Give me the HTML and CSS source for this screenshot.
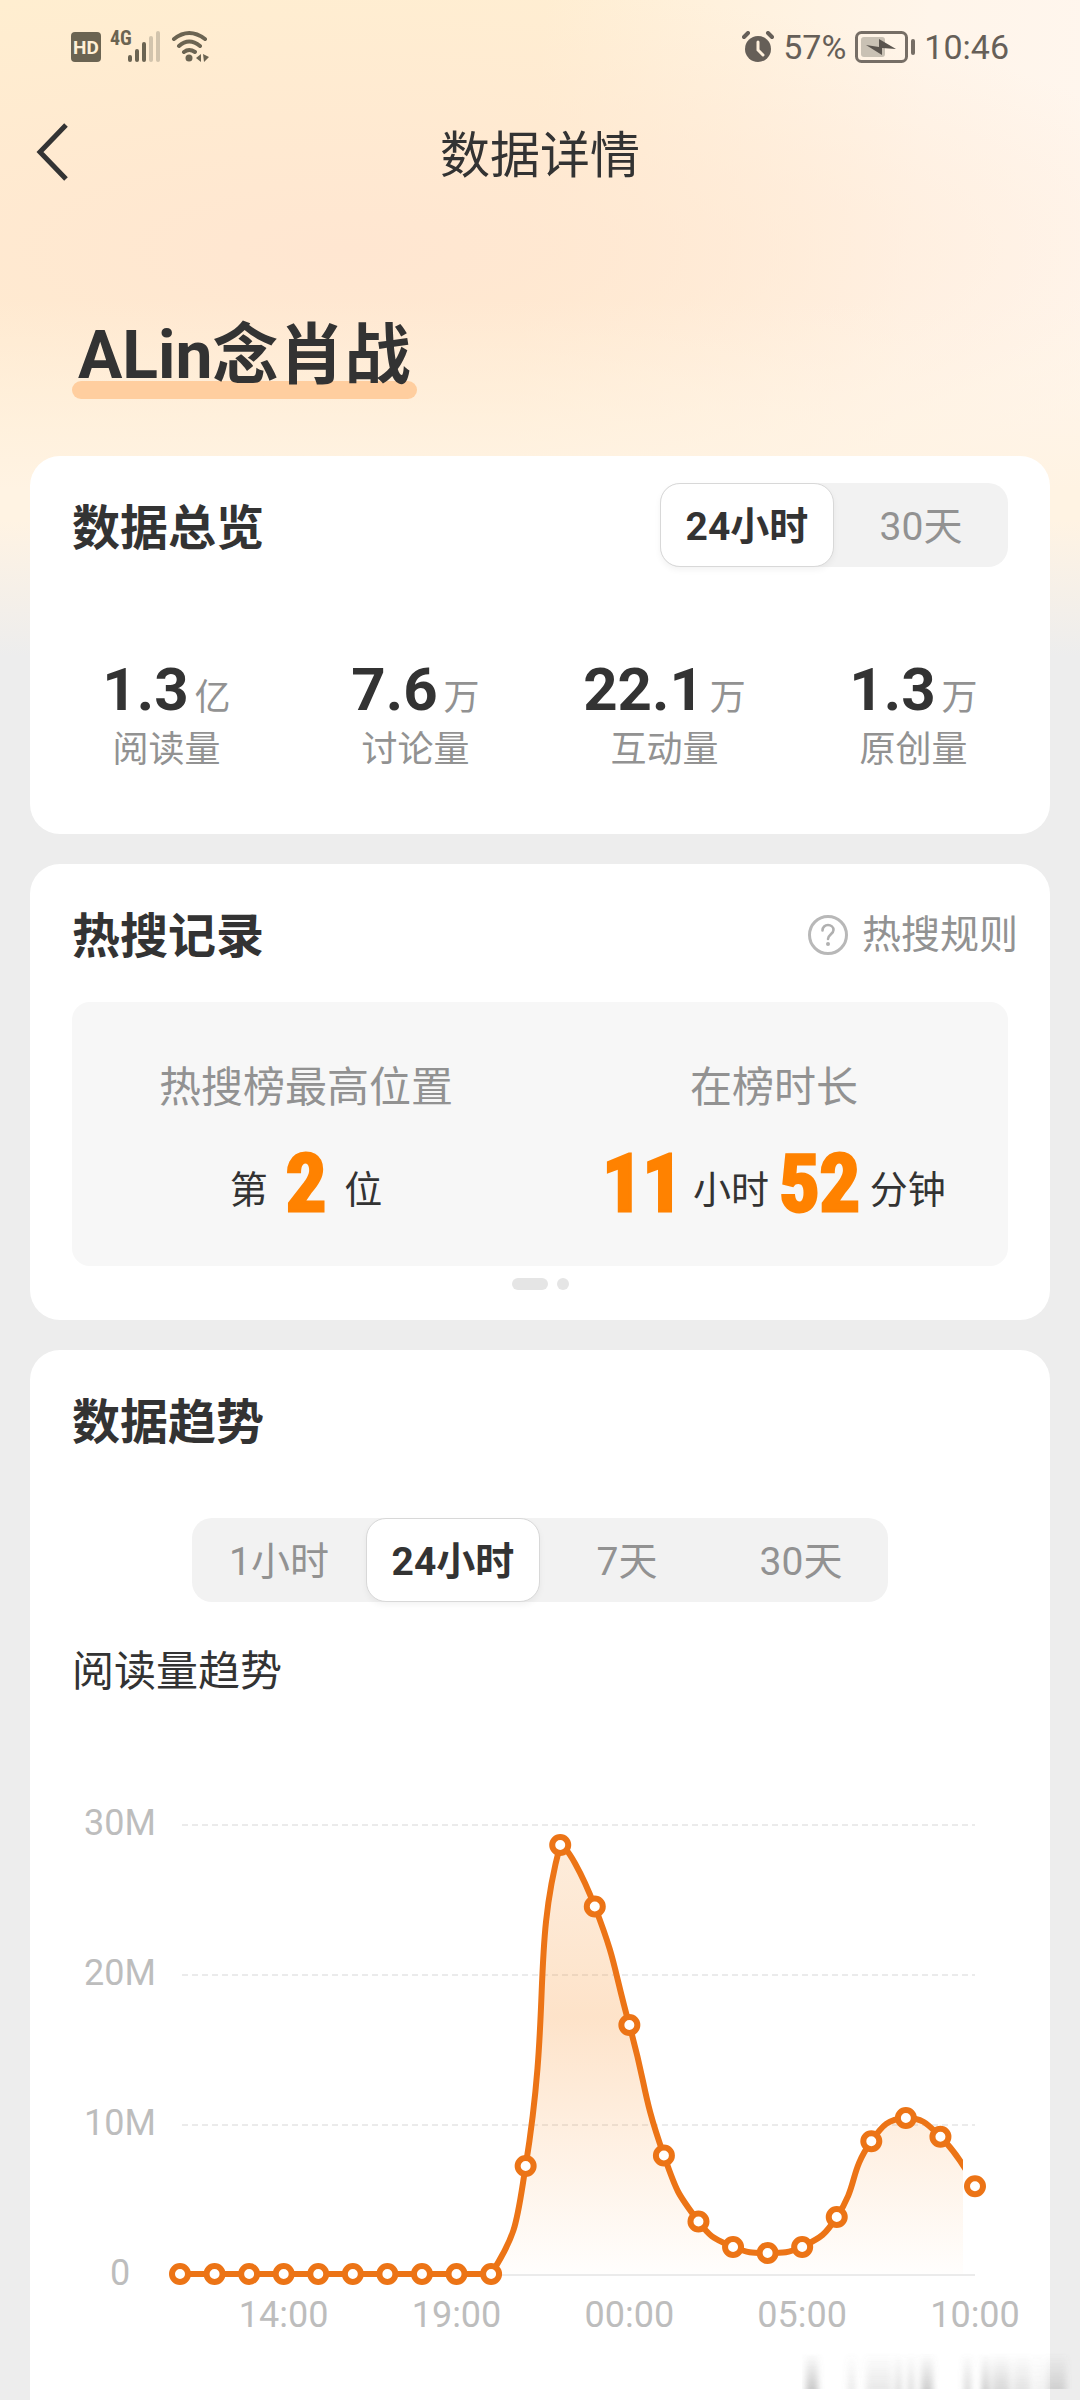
FILE: index.html
```html
<!DOCTYPE html>
<html lang="zh-CN">
<head>
  <meta charset="utf-8">
  <meta name="viewport" content="width=device-width, initial-scale=1">
  <title>数据详情</title>
  <link rel="stylesheet" href="styles.css">
</head>
<body>
  <div class="status-bar">
    <div class="status-group">
      <svg class="icon-hd" viewBox="0 0 30 30" width="30" height="30" aria-label="HD">
        <rect width="30" height="30" rx="4" fill="#6b6452"/>
        <text x="15" y="22" text-anchor="middle" class="hd-text">HD</text>
      </svg>
      <svg viewBox="0 0 52 42" width="52" height="42" aria-label="4G">
        <text x="0" y="19" class="net-text">4G</text>
        <g stroke-width="4" stroke-linecap="round" stroke="#6b6452">
          <path d="M20 31v3M27 25v9M34 18v16"/>
          <path d="M41 12v22M48 7v27" stroke="#d2c4ad"/>
        </g>
      </svg>
      <svg viewBox="0 0 40 34" width="40" height="34" aria-label="Wi-Fi">
        <g fill="none" stroke="#6b6452" stroke-width="4" stroke-linecap="round">
          <path d="M3 9Q18 -3 34 9M8 16Q18 7 29 16M13 22Q18 18 24 22"/>
        </g>
        <circle cx="18" cy="28" r="3.500" fill="#6b6452"/>
        <path d="M25 28l5-4v8zM32 24l6 3-5 5z" fill="#6b6452"/>
      </svg>
    </div>
    <div class="status-group">
      <svg viewBox="0 0 32 32" width="32" height="32" aria-label="闹钟">
        <circle cx="16" cy="18" r="13" fill="#665f58"/>
        <path d="M2 6l4-4M30 6l-4-4" stroke="#665f58" stroke-width="4" stroke-linecap="round"/>
        <path d="M16 11v8l5 5" fill="none" stroke="#fff0dc" stroke-width="3" stroke-linecap="round"/>
      </svg>
      <span class="battery-level">57%</span>
      <svg viewBox="0 0 60 32" width="60" height="32" aria-label="充电中">
        <rect x="1.500" y="1.500" width="50" height="29" rx="5" fill="none" stroke="#766e66" stroke-width="3"/>
        <rect x="6" y="6" width="24" height="20" rx="3" fill="#c9c1b4"/>
        <path d="M11 14l13 2V8l17 10-14-1v7z" fill="#5a544e"/>
        <rect x="56" y="8" width="4" height="16" rx="2" fill="#766e66"/>
      </svg>
      <time class="clock">10:46</time>
    </div>
  </div>

  <header class="nav">
    <button class="back" type="button" aria-label="返回">
      <svg viewBox="0 0 36 60" width="36" height="60"><path d="M31 3L5 30l26 27" fill="none" stroke="#333" stroke-width="5"/></svg>
    </button>
    <h1 class="nav-title">数据详情</h1>
  </header>

  <div class="topic"><span class="topic-name">ALin念肖战</span></div>

  <main class="cards">
    <section class="card">
      <div class="card-head">
        <h2>数据总览</h2>
        <div class="segment" role="group" aria-label="时间范围">
          <button type="button" class="active" aria-pressed="true">24小时</button>
          <button type="button" aria-pressed="false">30天</button>
        </div>
      </div>
      <ul class="stats">
        <li><p class="figure"><b>1.3</b><span>亿</span></p><p class="label">阅读量</p></li>
        <li><p class="figure"><b>7.6</b><span>万</span></p><p class="label">讨论量</p></li>
        <li><p class="figure"><b>22.1</b><span>万</span></p><p class="label">互动量</p></li>
        <li><p class="figure"><b>1.3</b><span>万</span></p><p class="label">原创量</p></li>
      </ul>
    </section>

    <section class="card">
      <div class="card-head">
        <h2>热搜记录</h2>
        <a class="rules" href="#rules">
          <svg viewBox="0 0 40 40" width="40" height="40" aria-hidden="true">
            <circle cx="20" cy="20" r="18.500" fill="none" stroke="#b8b8b8" stroke-width="3"/>
            <path d="M14.500 15.500c0-3.500 2.500-5.500 5.500-5.500s5.500 2 5.500 5c0 4-5.500 4.500-5.500 9" fill="none" stroke="#b0b0b0" stroke-width="2.600" stroke-linecap="round"/>
            <circle cx="20" cy="29" r="2" fill="#b0b0b0"/>
          </svg>
          <span>热搜规则</span>
        </a>
      </div>
      <div class="record">
        <div>
          <p class="record-label">热搜榜最高位置</p>
          <p class="record-value wide"><span>第</span><b>2</b><span>位</span></p>
        </div>
        <div>
          <p class="record-label">在榜时长</p>
          <p class="record-value"><b>11</b><span>小时</span><b>52</b><span>分钟</span></p>
        </div>
      </div>
      <div class="pager" aria-hidden="true"><i class="current"></i><i></i></div>
    </section>

    <section class="card last">
      <div class="card-head"><h2>数据趋势</h2></div>
      <div class="segment four" role="group" aria-label="趋势范围">
        <button type="button" aria-pressed="false">1小时</button>
        <button type="button" class="active" aria-pressed="true">24小时</button>
        <button type="button" aria-pressed="false">7天</button>
        <button type="button" aria-pressed="false">30天</button>
      </div>
      <h3>阅读量趋势</h3>
      <svg class="chart" id="chart" viewBox="0 0 1020 560" role="img" aria-label="阅读量趋势">
        <defs>
          <linearGradient id="area" x1="0" y1="0" x2="0" y2="1">
            <stop offset="0" stop-color="#f58a1f" stop-opacity=".16"/>
            <stop offset=".4" stop-color="#f98a1f" stop-opacity=".24"/>
            <stop offset="1" stop-color="#f98a1f" stop-opacity=".01"/>
          </linearGradient>
          <clipPath id="plot"><rect x="140" y="0" width="793" height="560"/></clipPath>
        </defs>
      </svg>
    </section>
  </main>

  <svg class="smudge" viewBox="0 0 270 36" width="270" height="36" aria-hidden="true">
    <defs>
      <linearGradient id="fade" x1="0" y1="0" x2="0" y2="1">
        <stop offset="0" stop-color="#777" stop-opacity="0"/>
        <stop offset="1" stop-color="#777" stop-opacity=".4"/>
      </linearGradient>
      <filter id="soft"><feGaussianBlur stdDeviation="3 0"/></filter>
    </defs>
    <g fill="url(#fade)" filter="url(#soft)">
      <rect x="4" width="12" height="36"/>
      <rect x="46" width="7" height="36" opacity=".4"/>
      <rect x="64" width="26" height="36" opacity=".4"/>
      <rect x="94" width="5" height="36" opacity=".8"/>
      <rect x="106" width="6" height="36" opacity=".7"/>
      <rect x="119" width="12" height="36" opacity=".9"/>
      <rect x="162" width="7" height="36" opacity=".7"/>
      <rect x="180" width="7" height="36"/>
      <rect x="190" width="18" height="36" opacity=".7"/>
      <rect x="211" width="18" height="36" opacity=".5"/>
      <rect x="232" width="10" height="36" opacity=".25"/>
      <rect x="244" width="20" height="36" opacity=".6"/>
    </g>
  </svg>
  <script src="chart.js"></script>
</body>
</html>
```
FILE: styles.css
```css
* { box-sizing: border-box; margin: 0; padding: 0; }

body {
  position: relative;
  display: flex;
  flex-direction: column;
  min-height: 100vh;
  font-family: Roboto, "Noto Sans CJK SC", sans-serif;
  color: #333;
  background-color: #ededed;
  background-image:
    linear-gradient(180deg, rgba(237, 237, 237, 0) 520px, #ededed 656px),
    linear-gradient(180deg, rgba(255, 243, 225, 0) 300px, #fff3e3 490px),
    radial-gradient(ellipse 900px 270px at 32% 250px, #ffe6d1, rgba(255, 230, 209, 0)),
    linear-gradient(95deg, #ffeed0 0, #ffeed2 48%, #fff5ea 82%, #fff6ee 100%);
  background-size: 100% 660px;
  background-repeat: no-repeat;
}

button { border: 0; background: none; font: inherit; color: inherit; cursor: pointer; }
svg { display: block; }

.status-bar {
  display: flex;
  justify-content: space-between;
  align-items: center;
  height: 94px;
  padding: 0 71px;
}
.status-group { display: flex; align-items: center; gap: 9px; }
.hd-text { font: 700 19px Roboto, sans-serif; fill: #fff0d6; }
.net-text { font: 700 20px "Roboto Condensed", Roboto, sans-serif; fill: #6b6452; }
.battery-level, .clock { font-size: 34px; line-height: 40px; color: #665f58; }

.nav {
  display: grid;
  grid-template-columns: 100px 1fr 100px;
  align-items: center;
  height: 116px;
}
.back { padding-left: 35px; }
.nav-title { padding-top: 8px; font-size: 50px; font-weight: 400; line-height: 72px; text-align: center; }

.topic { height: 246px; padding: 103px 72px 0; }
.topic-name {
  position: relative;
  z-index: 0;
  display: inline-block;
  padding: 0 6px;
  font-size: 66px;
  font-weight: 700;
  line-height: 86px;
}
.topic-name::before {
  content: "";
  position: absolute;
  z-index: -1;
  right: 0;
  bottom: 0;
  left: 0;
  height: 18px;
  border-radius: 9px;
  background: #ffce9f;
}

.cards { flex: 1; display: flex; flex-direction: column; gap: 30px; padding: 0 30px; }
.card { border-radius: 30px; background: #fff; }
.card.last { flex: 1; border-radius: 30px 30px 0 0; }

.card-head {
  display: flex;
  justify-content: space-between;
  align-items: center;
  height: 138px;
  padding: 0 42px;
}
h2 { padding-top: 8px; font-size: 48px; font-weight: 700; line-height: 70px; }

.segment {
  display: grid;
  grid-template-columns: repeat(2, 174px);
  border-radius: 20px;
  background: #f2f2f2;
}
.segment.four { grid-template-columns: repeat(4, 174px); width: max-content; margin: 30px auto 0; }
.segment button { height: 84px; padding-top: 4px; border-radius: 20px; font-size: 39px; line-height: 56px; color: #929292; }
.segment .active {
  border: 1px solid #d8d8d8;
  background: #fff;
  box-shadow: 0 3px 6px rgba(0, 0, 0, .05);
  font-weight: 700;
  color: #333;
}

.stats { display: grid; grid-template-columns: repeat(4, 1fr); padding: 60px 12px 58px; list-style: none; text-align: center; }
.figure { display: flex; justify-content: center; align-items: baseline; gap: 6px; height: 70px; line-height: 72px; }
.figure b { font-size: 60px; }
.figure span { font-size: 36px; color: #929292; }
.label { font-size: 36px; line-height: 52px; color: #929292; }

.rules {
  display: flex;
  align-items: center;
  gap: 14px;
  margin: 4px -10px 0 0;
  font-size: 39px;
  line-height: 56px;
  color: #929292;
  text-decoration: none;
}
.record {
  display: grid;
  grid-template-columns: 1fr 1fr;
  height: 264px;
  margin: 0 42px;
  padding-top: 56px;
  border-radius: 18px;
  background: #f7f7f7;
  text-align: center;
}
.record-label { font-size: 42px; line-height: 60px; color: #929292; }
.record-value { display: flex; justify-content: center; align-items: center; gap: 10px; height: 72px; margin-top: 30px; }
.record-value.wide { gap: 18px; }
.record-value b {
  font: 700 80px/72px "Roboto Condensed", Roboto, sans-serif;
  color: #ff8200;
  -webkit-text-stroke: 3px #ff8200;
}
.record-value span { padding-top: 12px; font-size: 38px; line-height: 56px; }

.pager { display: flex; justify-content: center; gap: 9px; padding: 12px 0 30px; }
.pager i { width: 12px; height: 12px; border-radius: 6px; background: #e5e5e5; }
.pager .current { width: 36px; }

h3 { margin: 40px 42px 0; font-size: 42px; font-weight: 400; line-height: 60px; }
.chart { width: 100%; margin-top: 98px; }
.chart text { font-size: 36px; fill: #bdbdbd; text-anchor: middle; }
.grid { stroke: #ebebeb; stroke-width: 2; stroke-dasharray: 6 4; }
.grid.base { stroke-dasharray: none; }
.line { fill: none; stroke: #ec7416; stroke-width: 6; }
.dot { fill: #fff; stroke: #ec7416; stroke-width: 6; }

.smudge { position: absolute; right: 8px; bottom: 11px; }
```
FILE: chart.js
```js
const SVG = 'http://www.w3.org/2000/svg';
const chart = document.getElementById('chart');
const reads = [0, 0, 0, 0, 0, 0, 0, 0, 0, 0, 7.2, 28.6, 24.5, 16.6, 7.9, 3.5, 1.8, 1.4, 1.8, 3.8, 8.85, 10.4, 9.15, 5.85];
const left = 150, right = 945, zero = 474, perMillion = 15;

function add(name, attrs, text) {
  const el = document.createElementNS(SVG, name);
  for (const key in attrs) el.setAttribute(key, attrs[key]);
  if (text) el.textContent = text;
  chart.appendChild(el);
}

const points = reads.map((v, i) => [left + (right - left) * i / (reads.length - 1), zero - v * perMillion]);
const clamp = (v, a, b) => Math.max(Math.min(a, b), Math.min(Math.max(a, b), v));

// Smooth curve whose control points stay inside the box of their own segment.
function curve(pts) {
  const dist = (a, b) => Math.hypot(a[0] - b[0], a[1] - b[1]);
  let d = `M${pts[0]}`;
  let out = pts[0];
  for (let i = 1; i < pts.length; i++) {
    const prev = pts[i - 1], p = pts[i], next = pts[i + 1];
    let cIn = p, cOut = p;
    if (next) {
      const a = dist(prev, p), b = dist(p, next);
      cOut = p.map((v, k) => clamp(v + (next[k] - prev[k]) * 0.5 * b / (a + b), v, next[k]));
      cIn = p.map((v, k) => clamp(v - (next[k] - prev[k]) * 0.5 * a / (a + b), v, prev[k]));
    }
    d += `C${out} ${cIn} ${p}`;
    out = cOut;
  }
  return d;
}

[30, 20, 10, 0].forEach(m => {
  const y = zero + 1 - m * perMillion;
  add('line', { x1: 152, x2: right, y1: y, y2: y, class: m ? 'grid' : 'grid base' });
  add('text', { x: 90, y: y + 10 }, m ? m + 'M' : '0');
});
['14:00', '19:00', '00:00', '05:00', '10:00'].forEach((t, i) => add('text', { x: points[3 + 5 * i][0], y: 527 }, t));

const path = curve(points);
add('path', { d: `${path}V${zero}H${left}Z`, fill: 'url(#area)', 'clip-path': 'url(#plot)' });
add('path', { d: path, class: 'line', 'clip-path': 'url(#plot)' });
points.forEach(([x, y]) => add('circle', { cx: x, cy: y, r: 8, class: 'dot' }));
```
